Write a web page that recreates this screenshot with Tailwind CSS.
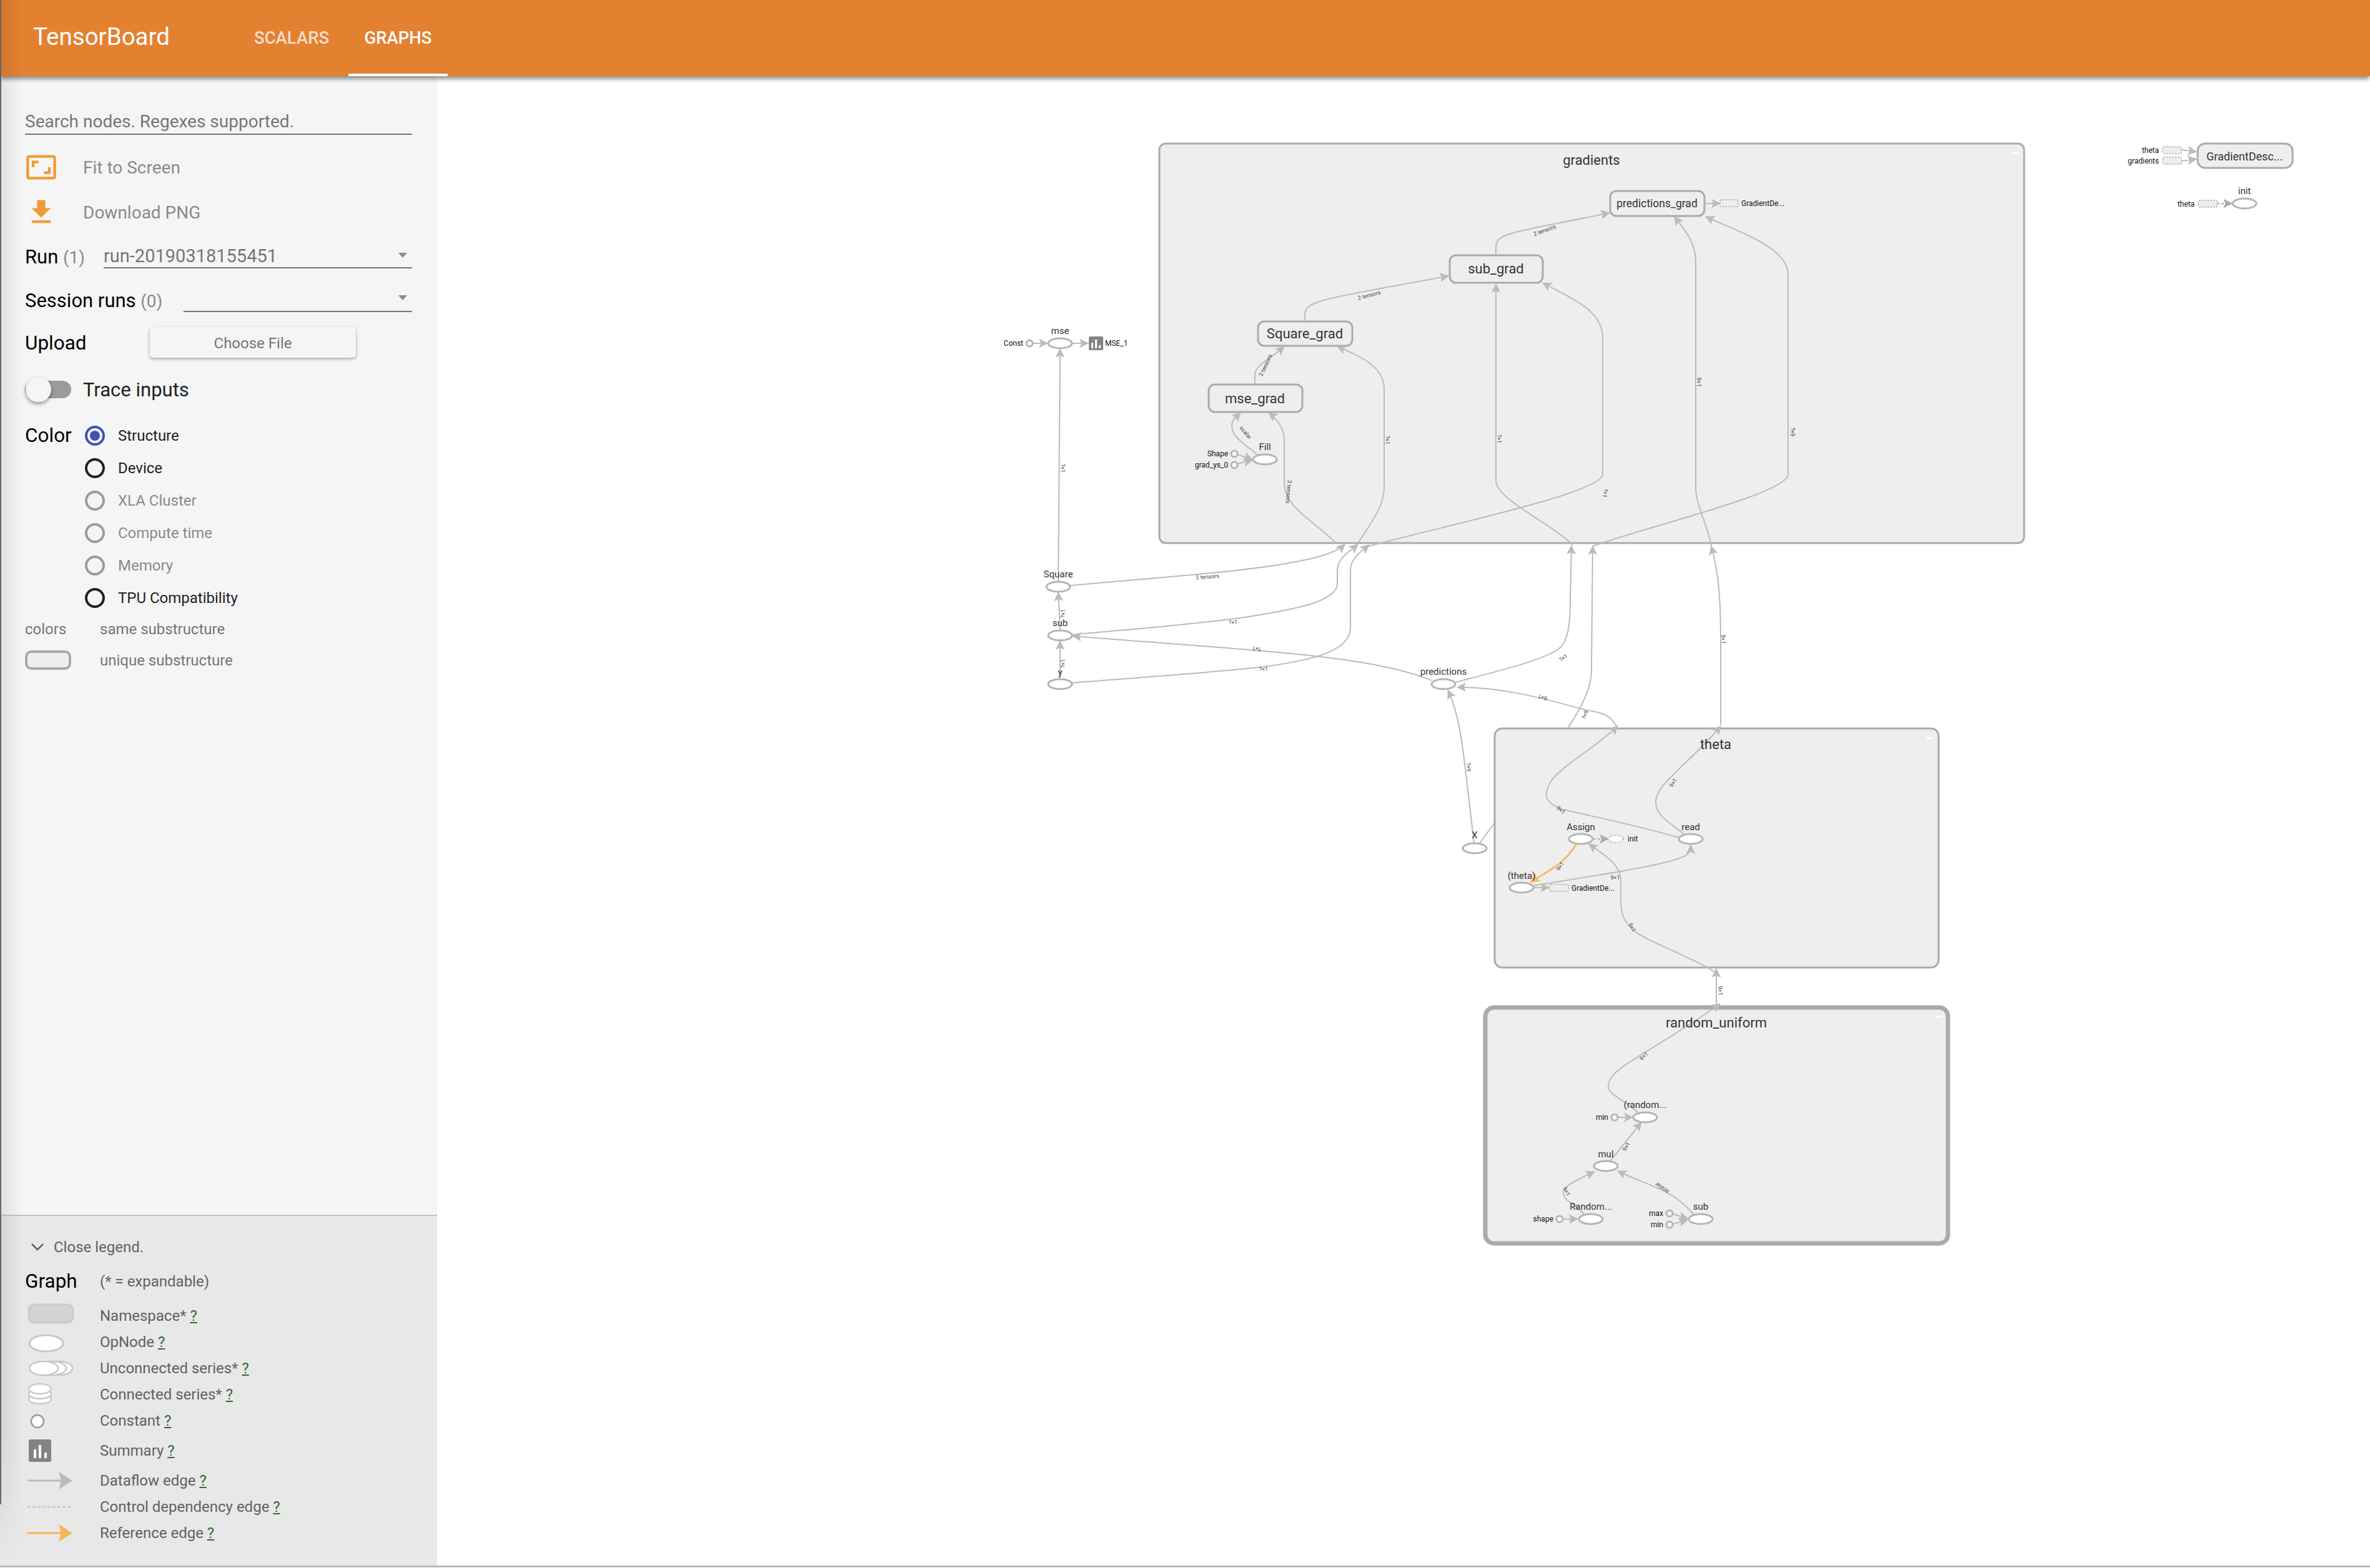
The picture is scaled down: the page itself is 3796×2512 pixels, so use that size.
<!DOCTYPE html>
<html lang="en">
<head>
  <meta charset="UTF-8">
  <title>TensorBoard</title>
  <script src="https://cdn.jsdelivr.net/npm/@tailwindcss/browser@4"></script>
</head>
<body class="bg-white font-[family-name:Roboto,sans-serif]">
<div class="relative w-[3796px] h-[2511px] flex flex-col overflow-hidden border-b-[3px] border-[#b8b8b8]">
  <!-- header -->
  <header class="relative z-10 h-[122px] shrink-0 bg-[#e48131] shadow-[0_6px_6px_-1px_rgba(0,0,0,0.4)] flex text-white">
    <div class="w-[407px] pl-[53px] flex items-center text-[38.5px] leading-none pb-[4px]">TensorBoard</div>
    <div class="h-full w-[151px] flex items-center text-[27.5px] font-medium text-white/75">SCALARS</div>
    <div class="h-full w-[159px] flex items-center justify-center text-[27.5px] font-medium border-b-4 border-white pt-[4px]">GRAPHS</div>
  </header>

  <main class="flex-1 flex min-h-0">
    <!-- sidebar -->
    <aside class="relative w-[700px] shrink-0 bg-[#f5f5f5] flex flex-col">
      <div class="flex-1 px-[40px]">
        <div class="mt-[50px] h-[44px] w-[620px] border-b-2 border-[#757575] flex items-center pt-[4px] text-[28px] text-[#757575]">Search nodes. Regexes supported.</div>

        <div class="mt-[32px] h-[40px] flex items-center text-[28px] text-[#8a8a8a]">
          <div class="w-[93px] shrink-0">
            <svg class="w-[52px] h-[52px] -my-[6px]" viewBox="0 0 24 24" fill="#f09a35"><path d="M19 12h-2v3h-3v2h5v-5zM7 9h3V7H5v5h2V9zm14-6H3c-1.1 0-2 .9-2 2v14c0 1.1.9 2 2 2h18c1.1 0 2-.9 2-2V5c0-1.1-.9-2-2-2zm0 16.01H3V4.99h18v14.02z"/></svg>
          </div>
          <span class="pt-[2px]">Fit to Screen</span>
        </div>
        <div class="mt-[32px] h-[40px] flex items-center text-[28px] text-[#8a8a8a]">
          <div class="w-[93px] shrink-0">
            <svg class="w-[52px] h-[52px] -my-[6px]" viewBox="0 0 24 24" fill="#f09a35"><path d="M19 9h-4V3H9v6H5l7 7 7-7zM5 18v2h14v-2H5z"/></svg>
          </div>
          <span class="pt-[2px]">Download PNG</span>
        </div>

        <div class="mt-[32px] h-[38px] flex items-center">
          <div class="w-[126px] shrink-0 text-[31px] text-black pt-[2px]">Run <span class="text-[28px] text-[#8a8a8a]">(1)</span></div>
          <div class="flex-1 h-full border-b-2 border-[#757575] flex items-center justify-between pr-[8px] pt-[2px]">
            <span class="text-[29px] text-[#757575]">run-20190318155451</span>
            <svg class="w-[14px] h-[8px] mb-[4px]" viewBox="0 0 14 8" fill="#8a8a8a"><path d="M0 0h14L7 8z"/></svg>
          </div>
        </div>
        <div class="mt-[32px] h-[38px] flex items-center">
          <div class="w-[254px] shrink-0 text-[31px] text-black pt-[2px]">Session runs <span class="text-[28px] text-[#8a8a8a]">(0)</span></div>
          <div class="flex-1 h-full border-b-2 border-[#757575] flex items-center justify-end pr-[8px] pb-[6px]">
            <svg class="w-[14px] h-[8px]" viewBox="0 0 14 8" fill="#8a8a8a"><path d="M0 0h14L7 8z"/></svg>
          </div>
        </div>

        <div class="mt-[24px] h-[49px] flex items-center">
          <div class="w-[200px] shrink-0 text-[31.5px] text-black pt-[3px]">Upload</div>
          <div class="w-[330px] h-full rounded-[5px] bg-[#f5f5f5] shadow-[0_2px_5px_rgba(0,0,0,0.35)] flex items-center justify-center pt-[2px] text-[24px] text-[#757575]">Choose File</div>
        </div>

        <div class="mt-[31px] h-[40px] flex items-center">
          <div class="relative w-[93px] shrink-0 h-full flex items-center">
            <div class="w-[74px] h-[28px] rounded-full bg-[#9b9b9b]"></div>
            <div class="absolute left-[1px] top-0 w-[41px] h-[40px] rounded-full bg-[#f5f5f5] shadow-[0_3px_6px_rgba(0,0,0,0.4)]"></div>
          </div>
          <span class="text-[31px] text-[#212121] pt-[3px]">Trace inputs</span>
        </div>

        <div class="mt-[38px] flex">
          <div class="w-[96px] shrink-0 h-[32px] flex items-center text-[31.5px] text-black">Color</div>
          <div class="flex flex-col gap-[20px] text-[24px]">
            <div class="h-[32px] flex items-center gap-[21px] text-[#212121]">
              <div class="w-[32px] h-[32px] rounded-full border-[4px] border-[#3f51b5] flex items-center justify-center"><div class="w-[16px] h-[16px] rounded-full bg-[#3f51b5]"></div></div>Structure
            </div>
            <div class="h-[32px] flex items-center gap-[21px] text-[#212121]">
              <div class="w-[32px] h-[32px] rounded-full border-[4px] border-[#212121]"></div>Device
            </div>
            <div class="h-[32px] flex items-center gap-[21px] text-[#8a8a8a]">
              <div class="w-[32px] h-[32px] rounded-full border-[4px] border-[#9b9b9b]"></div>XLA Cluster
            </div>
            <div class="h-[32px] flex items-center gap-[21px] text-[#8a8a8a]">
              <div class="w-[32px] h-[32px] rounded-full border-[4px] border-[#9b9b9b]"></div>Compute time
            </div>
            <div class="h-[32px] flex items-center gap-[21px] text-[#8a8a8a]">
              <div class="w-[32px] h-[32px] rounded-full border-[4px] border-[#9b9b9b]"></div>Memory
            </div>
            <div class="h-[32px] flex items-center gap-[21px] text-[#212121]">
              <div class="w-[32px] h-[32px] rounded-full border-[4px] border-[#212121]"></div>TPU Compatibility
            </div>
          </div>
        </div>

        <div class="mt-[18px] h-[32px] flex items-center text-[24px] text-[#757575]">
          <div class="w-[120px] shrink-0">colors</div>same substructure
        </div>
        <div class="mt-[18px] h-[31px] flex items-center text-[24px] text-[#757575]">
          <div class="w-[120px] shrink-0"><div class="w-[74px] h-[31px] rounded-[10px] border-[4px] border-[#a8a8a8] bg-[#eeeeee]"></div></div>unique substructure
        </div>
      </div>

      <!-- legend -->
      <div class="h-[562px] shrink-0 bg-[#e8e8e8] border-t-2 border-[#c4c4c4] px-[40px] text-[24px] text-[#616161]">
        <div class="mt-[34px] h-[32px] flex items-center">
          <svg class="w-[20px] h-[12px] ml-[10px] mr-[16px]" viewBox="0 0 20 12" fill="none" stroke="#616161" stroke-width="2.6"><path d="M1 1l9 9 9-9"/></svg>
          Close legend.
        </div>
        <div class="mt-[23px] h-[32px] flex items-center">
          <div class="w-[120px] shrink-0 text-[31.5px] text-black">Graph</div>(* = expandable)
        </div>

        <div class="mt-[18px] h-[42px] flex items-center">
          <svg class="w-[120px] h-[42px] shrink-0" viewBox="0 0 120 42"><rect x="6" y="3" width="71" height="29" rx="9" fill="#d3d3d3" stroke="#cbcbcb" stroke-width="3"/></svg>
          <span>Namespace* <u class="text-[#2e6b2e]">?</u></span>
        </div>
        <div class="h-[42px] flex items-center">
          <svg class="w-[120px] h-[42px] shrink-0" viewBox="0 0 120 42"><ellipse cx="34" cy="23" rx="27" ry="13" fill="#fff" stroke="#c8c8c8" stroke-width="3"/></svg>
          <span>OpNode <u class="text-[#2e6b2e]">?</u></span>
        </div>
        <div class="h-[42px] flex items-center">
          <svg class="w-[120px] h-[42px] shrink-0" viewBox="0 0 120 42" fill="#fff" stroke="#c8c8c8" stroke-width="2.5"><ellipse cx="54" cy="21" rx="22" ry="11"/><ellipse cx="44" cy="21" rx="22" ry="11"/><ellipse cx="30" cy="21" rx="23" ry="11"/></svg>
          <span>Unconnected series* <u class="text-[#2e6b2e]">?</u></span>
        </div>
        <div class="h-[42px] flex items-center">
          <svg class="w-[120px] h-[42px] shrink-0" viewBox="0 0 120 42" fill="#fff" stroke="#c8c8c8" stroke-width="2.5"><ellipse cx="24" cy="28" rx="18" ry="8"/><ellipse cx="24" cy="20" rx="18" ry="8"/><ellipse cx="24" cy="12" rx="18" ry="8"/></svg>
          <span>Connected series* <u class="text-[#2e6b2e]">?</u></span>
        </div>
        <div class="h-[42px] flex items-center">
          <svg class="w-[120px] h-[42px] shrink-0" viewBox="0 0 120 42"><circle cx="20" cy="22" r="10" fill="#fff" stroke="#9a9a9a" stroke-width="2.5"/></svg>
          <span>Constant <u class="text-[#2e6b2e]">?</u></span>
        </div>
        <div class="h-[54px] flex items-center">
          <svg class="w-[120px] h-[54px] shrink-0" viewBox="0 0 120 54"><rect x="6" y="9" width="36" height="36" rx="3" fill="#848484"/><path fill="#fff" d="M14 25h4v14h-4zM22 18h4v21h-4zM31 30h4v9h-4z"/></svg>
          <span>Summary <u class="text-[#2e6b2e]">?</u></span>
        </div>
        <div class="h-[42px] flex items-center">
          <svg class="w-[120px] h-[42px] shrink-0" viewBox="0 0 120 42"><path d="M4 21h56" stroke="#bbb" stroke-width="3"/><path d="M54 7l22 14-22 14 4-14z" fill="#bbb"/></svg>
          <span>Dataflow edge <u class="text-[#2e6b2e]">?</u></span>
        </div>
        <div class="h-[42px] flex items-center">
          <svg class="w-[120px] h-[42px] shrink-0" viewBox="0 0 120 42"><path d="M4 21h72" stroke="#c8c8c8" stroke-width="2.5" stroke-dasharray="5 3"/></svg>
          <span>Control dependency edge <u class="text-[#2e6b2e]">?</u></span>
        </div>
        <div class="h-[42px] flex items-center">
          <svg class="w-[120px] h-[42px] shrink-0" viewBox="0 0 120 42"><path d="M4 21h56" stroke="#f6b556" stroke-width="3"/><path d="M54 7l22 14-22 14 4-14z" fill="#f6b556"/></svg>
          <span>Reference edge <u class="text-[#2e6b2e]">?</u></span>
        </div>
      </div>
    </aside>

    <!-- graph canvas -->
    <svg class="block flex-1 min-w-0" width="3096" height="2386" viewBox="700 122 3096 2386" font-family="Roboto, sans-serif">
      <defs>
        <marker id="a" viewBox="0 0 14 14" refX="13" refY="7" markerWidth="15" markerHeight="15" orient="auto" markerUnits="userSpaceOnUse"><path d="M0 0L14 7L0 14L3 7z" fill="#bbb"/></marker>
        <marker id="o" viewBox="0 0 14 14" refX="13" refY="7" markerWidth="15" markerHeight="15" orient="auto" markerUnits="userSpaceOnUse"><path d="M0 0L14 7L0 14L3 7z" fill="#f6b556"/></marker>
        <marker id="d" viewBox="0 0 14 14" refX="13" refY="7" markerWidth="15" markerHeight="15" orient="auto" markerUnits="userSpaceOnUse"><path d="M0 0L14 7L0 14L3 7z" fill="#aaa"/></marker>
      </defs>

      <!-- edge that passes behind the theta box -->
      <g fill="none" stroke="#bbb" stroke-width="2">
        <path d="M2370 1351L2450 1240C2500 1190 2549 1120 2549 1075L2551 875" marker-end="url(#a)"/>
      </g>

      <!-- namespaces -->
      <g fill="#eee" stroke="#aaa">
        <rect x="1857" y="230" width="1385" height="640" rx="10" stroke-width="3"/>
        <rect x="2394" y="1167" width="711" height="383" rx="12" stroke-width="3"/>
        <rect x="2379" y="1614" width="741" height="378" rx="14" stroke-width="7"/>
        <g stroke-width="3">
          <rect x="2579" y="306" width="151" height="40" rx="10"/>
          <rect x="2322" y="409" width="149" height="44" rx="10"/>
          <rect x="2015" y="515" width="151" height="39" rx="10"/>
          <rect x="1936" y="616" width="150" height="44" rx="10"/>
          <rect x="3520" y="230" width="152" height="39" rx="12"/>
        </g>
      </g>
      <path fill="#fff" d="M3223 244h10v3h-10zM3085 1181h10v3h-10zM3101 1627h10v3h-10z"/>

      <!-- dataflow edges -->
      <g fill="none" stroke="#bbb" stroke-width="2" marker-end="url(#a)">
        <path d="M1695 931L1698 559"/>
        <path d="M1655 550H1678"/>
        <path d="M1718 550H1743"/>
        <path d="M1698 1010L1695 949"/>
        <path d="M1698 1088V1027"/>
        <path d="M1714 938C1850 926 1960 918 2040 906C2090 898 2135 890 2154 872"/>
        <path d="M1717 1017C1830 1006 1920 1000 2000 988C2060 978 2142 966 2142 935V914C2142 894 2160 885 2175 872"/>
        <path d="M1718 1094C1840 1084 1940 1078 2024 1068C2100 1058 2163 1044 2163 1005V914C2163 895 2178 885 2193 873"/>
        <path d="M2293 1090C2200 1052 2050 1045 1718 1019"/>
        <path d="M2331 1093C2400 1075 2470 1058 2496 1040C2512 1028 2515 1000 2515 960L2517 874"/>
        <path d="M2589 1163C2575 1140 2560 1142 2534 1136C2470 1118 2400 1100 2334 1101"/>
        <path d="M2361 1351L2348 1240C2342 1190 2336 1140 2319 1106"/>
        <path d="M2756 1161V1030C2756 960 2753 920 2741 875"/>
        <path d="M2749 1610V1552"/>

        <!-- gradients -->
        <path d="M2014 729C1990 708 1973 700 1973 682C1973 672 1980 668 1987 661"/>
        <path d="M2139 869C2100 832 2057 810 2057 775V705C2057 690 2050 675 2032 661"/>
        <path d="M2175 870C2200 832 2217 810 2217 780V623C2217 585 2175 570 2142 555"/>
        <path d="M2010 615V600C2010 585 2035 575 2057 555"/>
        <path d="M2090 514V504C2090 480 2130 478 2320 442"/>
        <path d="M2396 408V395C2396 372 2430 372 2578 341"/>
        <path d="M2519 873C2480 835 2396 800 2396 770V455"/>
        <path d="M2193 875C2300 845 2567 790 2567 760V540C2567 495 2510 475 2471 453"/>
        <path d="M2741 875C2735 840 2716 810 2716 780V420C2716 385 2695 365 2682 347"/>
        <path d="M2551 875C2650 840 2864 790 2864 760V440C2864 395 2780 370 2732 347"/>
        <path d="M2730 326H2755"/>
        <path d="M1982 728L2006 736"/>
        <path d="M1982 743L2006 737"/>

        <!-- theta -->
        <path d="M2690 1342C2620 1322 2560 1310 2500 1296C2475 1285 2470 1275 2485 1250C2510 1220 2560 1195 2591 1163"/>
        <path d="M2697 1336C2670 1315 2652 1305 2652 1285C2652 1255 2710 1220 2756 1163"/>
        <path d="M2456 1419C2560 1402 2640 1390 2680 1378C2702 1372 2708 1368 2708 1354"/>
        <path d="M2748 1558C2700 1528 2640 1510 2616 1490C2600 1475 2596 1465 2596 1440V1410C2596 1385 2570 1370 2545 1352"/>
        <path d="M2457 1422H2481"/>

        <!-- random_uniform -->
        <path d="M2624 1783C2600 1760 2576 1755 2576 1740C2576 1710 2640 1690 2755 1608"/>
        <path d="M2579 1860L2629 1798"/>
        <path d="M2537 1945C2520 1925 2504 1925 2504 1910C2504 1900 2530 1888 2554 1877"/>
        <path d="M2713 1946C2680 1905 2640 1900 2591 1876"/>
        <path d="M2592 1790H2615"/>
        <path d="M2504 1953H2527"/>
        <path d="M2680 1945L2703 1952"/>
        <path d="M2680 1961L2703 1954"/>
        <path d="M3494 240L3518 243"/>
        <path d="M3494 258L3518 255"/>
      </g>
      <path d="M2525 1352C2505 1385 2480 1395 2452 1413" fill="none" stroke="#f6b556" stroke-width="2.5" marker-end="url(#o)"/>
      <g fill="none" stroke="#bbb" stroke-width="2.5" stroke-dasharray="4 3" marker-end="url(#d)">
        <path d="M2552 1344H2576"/>
        <path d="M3551 326H3575"/>
      </g>

      <!-- op nodes -->
      <g fill="#fff" stroke="#b4b4b4" stroke-width="3">
        <ellipse cx="1698" cy="550" rx="19" ry="8"/>
        <ellipse cx="1695" cy="940" rx="19" ry="8"/>
        <ellipse cx="1698" cy="1018" rx="19" ry="8"/>
        <ellipse cx="1698" cy="1096" rx="19" ry="8"/>
        <ellipse cx="2312" cy="1096" rx="19" ry="8"/>
        <ellipse cx="2362" cy="1359" rx="19" ry="8"/>
        <ellipse cx="2026" cy="736" rx="19" ry="8"/>
        <ellipse cx="2532" cy="1344" rx="19" ry="8"/>
        <ellipse cx="2708" cy="1344" rx="19" ry="8"/>
        <ellipse cx="2437" cy="1422" rx="19" ry="8"/>
        <ellipse cx="2635" cy="1790" rx="19" ry="8"/>
        <ellipse cx="2572" cy="1868" rx="19" ry="8"/>
        <ellipse cx="2548" cy="1953" rx="19" ry="8"/>
        <ellipse cx="2724" cy="1953" rx="19" ry="8"/>
        <ellipse cx="3595" cy="326" rx="19" ry="8"/>
        <circle cx="1649" cy="550" r="5"/>
        <circle cx="1977" cy="727" r="5"/>
        <circle cx="1977" cy="745" r="5"/>
        <circle cx="2586" cy="1790" r="5"/>
        <circle cx="2498" cy="1953" r="5"/>
        <circle cx="2674" cy="1944" r="5"/>
        <circle cx="2674" cy="1962" r="5"/>
      </g>
      <!-- extracted / dashed nodes -->
      <g stroke="#aaa" stroke-width="1.5" stroke-dasharray="2.5 2">
        <rect x="2755" y="320" width="29" height="11" rx="2" fill="#eee"/>
        <rect x="2482" y="1417" width="30" height="11" rx="2" fill="#eee"/>
        <ellipse cx="2588" cy="1344" rx="12" ry="5.5" fill="#fff"/>
        <rect x="3464" y="235" width="30" height="11" rx="2" fill="#eee"/>
        <rect x="3464" y="252" width="30" height="11" rx="2" fill="#eee"/>
        <rect x="3521" y="321" width="30" height="11" rx="2" fill="#eee"/>
      </g>
      <!-- summary icon -->
      <rect x="1744" y="539" width="23" height="22" rx="2" fill="#848484"/>
      <path fill="#fff" d="M1748 549h3v9h-3zM1754 544h3v14h-3zM1760 553h3v5h-3z"/>

      <!-- namespace labels -->
      <g text-anchor="middle" dominant-baseline="central" fill="#333">
        <text x="2549" y="256" font-size="22">gradients</text>
        <text x="2748" y="1192" font-size="22">theta</text>
        <text x="2749" y="1638" font-size="22">random_uniform</text>
        <text x="2654" y="326" font-size="17.5">predictions_grad</text>
        <text x="2396" y="430" font-size="22">sub_grad</text>
        <text x="2090" y="534" font-size="22">Square_grad</text>
        <text x="2010" y="638" font-size="22">mse_grad</text>
        <text x="3595" y="250" font-size="18">GradientDesc...</text>
      </g>
      <!-- op labels -->
      <g text-anchor="middle" dominant-baseline="central" fill="#333" font-size="15">
        <text x="1698" y="530">mse</text>
        <text x="1695" y="920">Square</text>
        <text x="1698" y="998">sub</text>
        <text x="1698" y="1077">y</text>
        <text x="2312" y="1076">predictions</text>
        <text x="2362" y="1338">X</text>
        <text x="2026" y="716">Fill</text>
        <text x="2532" y="1325">Assign</text>
        <text x="2708" y="1325">read</text>
        <text x="2437" y="1403">(theta)</text>
        <text x="2635" y="1770">(random...</text>
        <text x="2572" y="1849">mul</text>
        <text x="2548" y="1933">Random...</text>
        <text x="2724" y="1933">sub</text>
        <text x="3595" y="306">init</text>
      </g>
      <!-- annotation labels -->
      <g dominant-baseline="central" fill="#111" font-size="12">
        <g text-anchor="end">
          <text x="1639" y="550">Const</text>
          <text x="1967" y="727">Shape</text>
          <text x="1967" y="745">grad_ys_0</text>
          <text x="2576" y="1790">min</text>
          <text x="2488" y="1953">shape</text>
          <text x="2664" y="1944">max</text>
          <text x="2664" y="1962">min</text>
          <text x="3458" y="241">theta</text>
          <text x="3458" y="258">gradients</text>
          <text x="3515" y="327">theta</text>
        </g>
        <text x="1770" y="550">MSE_1</text>
        <text x="2789" y="326">GradientDe...</text>
        <text x="2607" y="1344">init</text>
        <text x="2517" y="1423">GradientDe...</text>
      </g>
      <!-- edge labels -->
      <g text-anchor="middle" dominant-baseline="central" fill="#444" font-size="9">
        <text transform="translate(1702 750) rotate(90)">?×1</text>
        <text transform="translate(1934 924) rotate(-5)">2 tensors</text>
        <text transform="translate(1975 997) rotate(-5)">?×1</text>
        <text transform="translate(2024 1072) rotate(-5)">?×1</text>
        <text transform="translate(2013 1039) rotate(185)">?×1</text>
        <text transform="translate(1703 983) rotate(-90)">?×1</text>
        <text transform="translate(1703 1063) rotate(-90)">?×1</text>
        <text transform="translate(2064 788) rotate(95)">2 tensors</text>
        <text transform="translate(1995 693) rotate(50)">scalar</text>
        <text transform="translate(2222 705) rotate(90)">?×1</text>
        <text transform="translate(2027 585) rotate(-65)">2 tensors</text>
        <text transform="translate(2193 473) rotate(-15)">2 tensors</text>
        <text transform="translate(2474 369) rotate(-20)">2 tensors</text>
        <text transform="translate(2401 703) rotate(90)">?×1</text>
        <text transform="translate(2571 790) rotate(100)">?×1</text>
        <text transform="translate(2721 612) rotate(90)">9×1</text>
        <text transform="translate(2871 692) rotate(90)">?×9</text>
        <text transform="translate(2504 1054) rotate(-35)">?×1</text>
        <text transform="translate(2539 1145) rotate(-70)">?×9</text>
        <text transform="translate(2760 1024) rotate(90)">9×1</text>
        <text transform="translate(2471 1117) rotate(195)">9×1</text>
        <text transform="translate(2352 1229) rotate(85)">?×9</text>
        <text transform="translate(2499 1388) rotate(-55)">9×1</text>
        <text transform="translate(2587 1406)">9×1</text>
        <text transform="translate(2500 1298) rotate(40)">9×1</text>
        <text transform="translate(2680 1254) rotate(-60)">9×1</text>
        <text transform="translate(2614 1486) rotate(60)">9×1</text>
        <text transform="translate(2755 1587) rotate(90)">9×1</text>
        <text transform="translate(2633 1692) rotate(-45)">9×1</text>
        <text transform="translate(2605 1837) rotate(-60)">9×1</text>
        <text transform="translate(2509 1909) rotate(60)">9×1</text>
        <text transform="translate(2662 1903) rotate(215)">scalar</text>
      </g>
    </svg>
  </main>
  <!-- faint window shadow along the left edge -->
  <div class="absolute inset-y-0 left-0 z-20 w-[36px] bg-linear-to-r from-black/8 to-transparent [mask-image:linear-gradient(to_bottom,black_92%,transparent)]"></div>
  <div class="absolute left-0 top-0 z-20 h-[2410px] w-[2px] bg-[#666]"></div>
</div>
</body>
</html>
